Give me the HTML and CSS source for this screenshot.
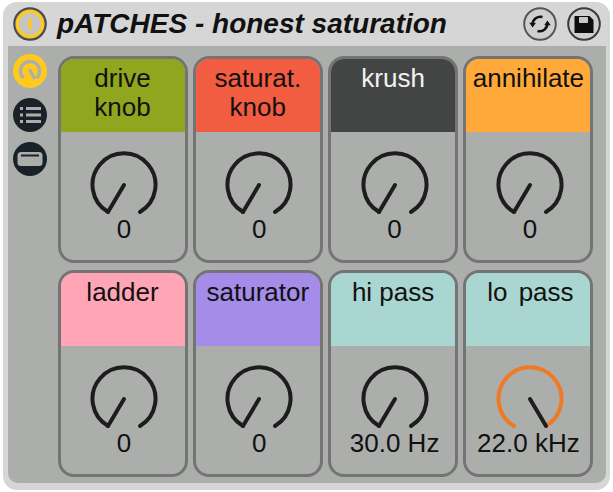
FILE: index.html
```html
<!DOCTYPE html>
<html lang="en">
<head>
<meta charset="utf-8">
<title>pATCHES</title>
<link rel="stylesheet" href="styles.css">
</head>
<body>
<main class="device">
  <header class="titlebar">
    <svg class="round-btn" viewBox="0 0 34 34"><circle cx="17" cy="17" r="15.800" fill="#8a8a8a" stroke="#4a4a4a" stroke-width="2"/><circle cx="17" cy="17" r="12.600" fill="#c4c4c4" stroke="#ffc91e" stroke-width="3.400"/><path d="M17 11.500V22.500" stroke="#ffc91e" stroke-width="3.200"/></svg>
    <h1 class="title">pATCHES - honest saturation</h1>
    <div class="actions">
      <svg class="round-btn" viewBox="0 0 34 34"><circle cx="17" cy="17" r="15.800" fill="#cfcfcf" stroke="#555" stroke-width="2"/><path d="M9.500 17.500A8 8 0 0 1 19.500 10" fill="none" stroke="#111" stroke-width="2.500"/><path d="M24.500 16.500A8 8 0 0 1 14.500 24" fill="none" stroke="#111" stroke-width="2.500"/><path d="M6.300 15.800H13L9.600 20.500Z M21.200 18.200H27.800L24.400 13.500Z" fill="#111"/></svg>
      <svg class="round-btn" viewBox="0 0 34 34"><circle cx="17" cy="17" r="15.800" fill="#cfcfcf" stroke="#3a3a3a" stroke-width="2"/><path d="M7.500 9H22.500L26.500 13V26H7.500Z" fill="#0d0d0d"/><rect x="12" y="10" width="9" height="6" rx=".8" fill="#c8c8c8"/></svg>
    </div>
  </header>
  <div class="workspace">
    <nav class="sidebar">
      <svg class="round-btn" viewBox="0 0 34 34"><circle cx="17" cy="17" r="17" fill="#ffc91e"/><path d="M10.500 24A9.500 9.500 0 1 1 23.500 24" fill="none" stroke="#acaeac" stroke-width="3.400"/><path d="M17 16.500L21 23.500" stroke="#acaeac" stroke-width="3.400" stroke-linecap="round"/></svg>
      <svg class="round-btn" viewBox="0 0 34 34"><circle cx="17" cy="17" r="17" fill="#1a2229"/><path d="M13 10.500H28M13 17H28M13 23.500H28" stroke="#acaeac" stroke-width="3"/><path d="M7 10.500H10M7 17H10M7 23.500H10" stroke="#acaeac" stroke-width="3"/></svg>
      <svg class="round-btn" viewBox="0 0 34 34"><circle cx="17" cy="17" r="17" fill="#1a2229"/><rect x="4.500" y="10" width="25" height="14" rx="3.500" fill="#acaeac"/><path d="M8 13.500H26" stroke="#1a2229" stroke-width="2"/></svg>
    </nav>
    <section class="grid">
      <article class="card"><div class="label green">drive<br>knob</div><div class="knob"><svg class="dial" viewBox="0 0 70 70"><path class="arc" d="M19 62A31.500 31.500 0 1 1 51 62"/><path class="needle" d="M35 35L19 62"/></svg><span class="value">0</span></div></article>
      <article class="card"><div class="label red">saturat.<br>knob</div><div class="knob"><svg class="dial" viewBox="0 0 70 70"><path class="arc" d="M19 62A31.500 31.500 0 1 1 51 62"/><path class="needle" d="M35 35L19 62"/></svg><span class="value">0</span></div></article>
      <article class="card"><div class="label charcoal">krush</div><div class="knob"><svg class="dial" viewBox="0 0 70 70"><path class="arc" d="M19 62A31.500 31.500 0 1 1 51 62"/><path class="needle" d="M35 35L19 62"/></svg><span class="value">0</span></div></article>
      <article class="card"><div class="label orange">annihilate</div><div class="knob"><svg class="dial" viewBox="0 0 70 70"><path class="arc" d="M19 62A31.500 31.500 0 1 1 51 62"/><path class="needle" d="M35 35L19 62"/></svg><span class="value">0</span></div></article>
      <article class="card"><div class="label pink">ladder</div><div class="knob"><svg class="dial" viewBox="0 0 70 70"><path class="arc" d="M19 62A31.500 31.500 0 1 1 51 62"/><path class="needle" d="M35 35L19 62"/></svg><span class="value">0</span></div></article>
      <article class="card"><div class="label violet">saturator</div><div class="knob"><svg class="dial" viewBox="0 0 70 70"><path class="arc" d="M19 62A31.500 31.500 0 1 1 51 62"/><path class="needle" d="M35 35L19 62"/></svg><span class="value">0</span></div></article>
      <article class="card"><div class="label teal">hi pass</div><div class="knob"><svg class="dial" viewBox="0 0 70 70"><path class="arc" d="M19 62A31.500 31.500 0 1 1 51 62"/><path class="needle" d="M35 35L19 62"/></svg><span class="value">30.0 Hz</span></div></article>
      <article class="card"><div class="label teal lo-pass">lo pass</div><div class="knob"><svg class="dial" viewBox="0 0 70 70"><path class="arc hot" d="M19 62A31.500 31.500 0 1 1 51 62"/><path class="needle" d="M35 35L51 62"/></svg><span class="value wide">22.0 kHz</span></div></article>
    </section>
  </div>
</main>
</body>
</html>
```
FILE: styles.css
```css
* { box-sizing: border-box; }
html, body { margin: 0; height: 100%; background: #fff; }
body { padding: 2px 3px 2px 3px; font-family: "Liberation Sans", Arial, sans-serif; color: #111; }
.device { height: 488px; background: #d6d6d6; border-radius: 14px; display: flex; flex-direction: column; overflow: hidden; }
.titlebar { height: 44px; flex: none; display: flex; align-items: center; padding: 0 9px 0 10px; }
.round-btn { display: block; width: 34px; height: 34px; flex: none; }
.title { margin: 0 0 0 10px; font-size: 28px; line-height: 34px; font-weight: 700; font-style: italic; color: #111; white-space: nowrap; flex: 1; }
.actions { display: flex; gap: 10px; }
.workspace { flex: 1; min-height: 0; margin: 0 4px 7px 5px; background: #acaeac; display: flex; padding: 8px 0 0 5px; border-radius: 0 0 10px 10px; }
.sidebar { width: 44.500px; flex: none; display: flex; flex-direction: column; gap: 10px; }
.grid { flex: 1; display: grid; grid-template-columns: repeat(4, 130px); grid-template-rows: repeat(2, 207px); column-gap: 5.300px; row-gap: 7px; padding-top: 2px; }
.card { border: 3px solid #737473; border-radius: 16px; overflow: hidden; display: flex; flex-direction: column; background: #acaeac; }
.label { height: 73px; flex: none; text-align: center; font-size: 26px; line-height: 29px; padding-top: 5px; white-space: nowrap; color: #111; }
.lo-pass { padding-left: 4px; word-spacing: 4px; }
.green { background: #90a61f; }
.red { background: #f25c41; }
.charcoal { background: #434544; color: #f2f2f2; }
.orange { background: #ffa93a; }
.pink { background: #ffa5b5; }
.violet { background: #a58ce8; }
.teal { background: #a9d6d0; }
.knob { flex: 1; display: flex; flex-direction: column; align-items: center; padding: 18px 0 0 3px; }
.dial { display: block; width: 70px; height: 70px; flex: none; }
.arc { fill: none; stroke: #1d1d1d; stroke-width: 4; stroke-linecap: round; }
.arc.hot { stroke: #ef7a26; }
.needle { fill: none; stroke: #1d1d1d; stroke-width: 4; stroke-linecap: round; }
.value { font-size: 26px; line-height: 28px; margin-top: -5px; color: #111; white-space: nowrap; }
.value.wide { margin-left: -3px; }
```
